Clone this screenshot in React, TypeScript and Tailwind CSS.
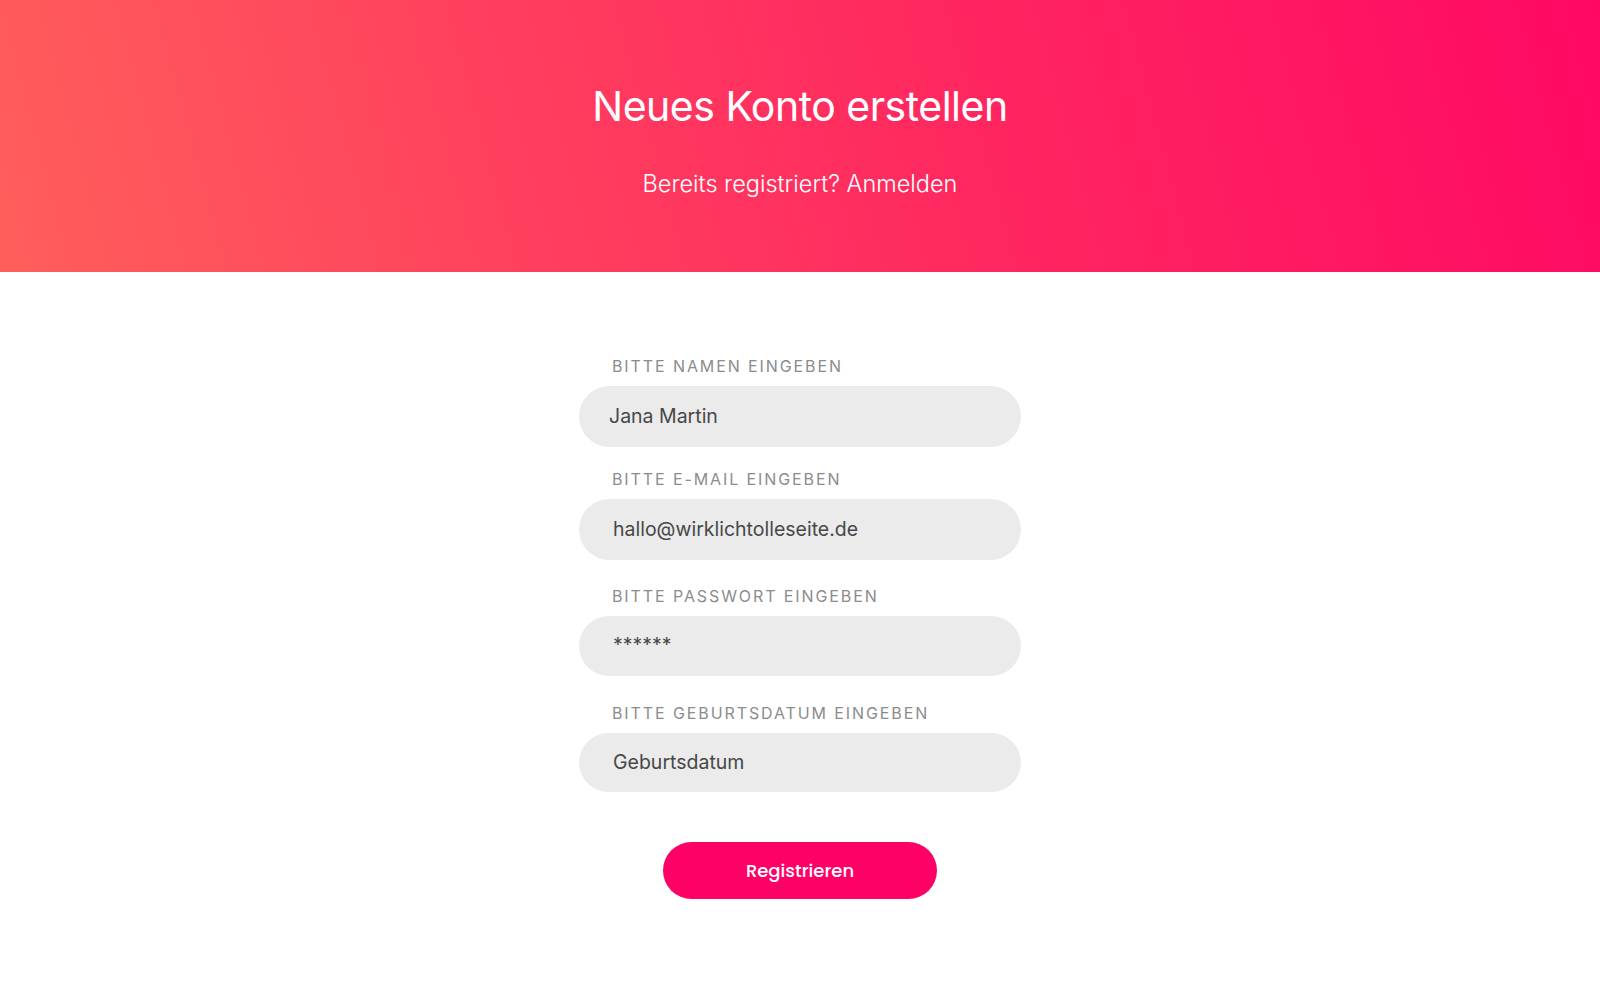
import React from "react";

const fields = [
  { label: "BITTE NAMEN EINGEBEN", value: "Jana Martin", mt: "mt-[84px]", pl: "pl-[30px]", h: "h-[61px]" },
  { label: "BITTE E-MAIL EINGEBEN", value: "hallo@wirklichtolleseite.de", mt: "mt-[22px]", pl: "pl-[34px]", h: "h-[61px]" },
  { label: "BITTE PASSWORT EINGEBEN", value: "******", mt: "mt-[26px]", pl: "pl-[34px]", h: "h-[60px]" },
  { label: "BITTE GEBURTSDATUM EINGEBEN", value: "Geburtsdatum", mt: "mt-[27px]", pl: "pl-[34px]", h: "h-[59px]" },
];

export default function App() {
  return (
    <div className="w-full min-h-[1000px] bg-white" style={{ fontFamily: "Inter, 'Noto Sans', sans-serif" }}>
      <header className="h-[272px] w-full bg-[linear-gradient(75deg,#ff5f5b_0%,#ff3d5e_35%,#ff1f61_70%,#ff0864_100%)] flex flex-col items-center text-white">
        <h1 className="mt-[81px] text-[41px] leading-[50px] font-normal tracking-[-0.5px]">Neues Konto erstellen</h1>
        <p className="mt-[38px] text-[23.5px] leading-[30px] font-light">Bereits registriert? Anmelden</p>
      </header>
      <main className="flex flex-col items-center">
        <div className="w-[442px] flex flex-col">
          {fields.map((f) => (
            <div key={f.label} className={`${f.mt} flex flex-col`}>
              <label className="pl-[33px] text-[16px] leading-[20px] tracking-[1.9px] text-[#8c8c8c]">{f.label}</label>
              <div className={`mt-[10px] ${f.h} rounded-full bg-[#ebebeb] flex items-center ${f.pl} text-[19.5px] text-[#474747]`}>
                {f.value}
              </div>
            </div>
          ))}
          <div className="flex justify-center mt-[50px]">
            <button className="w-[274px] h-[57px] rounded-full bg-[#ff0066] text-white text-[18px] font-medium" style={{ fontFamily: "Poppins, Inter, sans-serif" }}>
              Registrieren
            </button>
          </div>
        </div>
      </main>
    </div>
  );
}
